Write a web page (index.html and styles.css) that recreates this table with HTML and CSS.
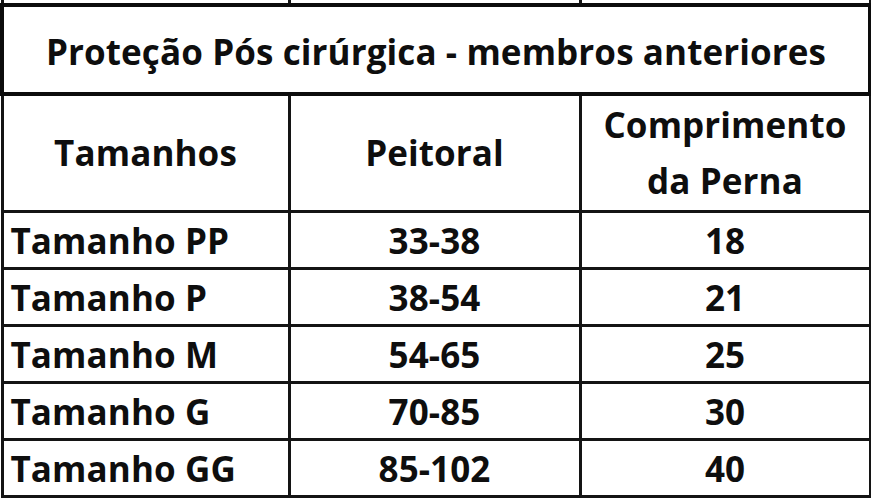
FILE: index.html
```html
<!DOCTYPE html>
<html lang="pt">
<head>
<meta charset="utf-8">
<link rel="stylesheet" href="styles.css">
</head>
<body>
<table class="sizes">
  <colgroup>
    <col class="c1"><col class="c2"><col class="c3">
  </colgroup>
  <tr class="stub"><td></td><td></td><td></td></tr>
  <tr class="title"><td colspan="3">Proteção Pós cirúrgica - membros anteriores</td></tr>
  <tr class="head">
    <td>Tamanhos</td>
    <td>Peitoral</td>
    <td>Comprimento<br>da Perna</td>
  </tr>
  <tr class="row"><td class="name">Tamanho PP</td><td>33-38</td><td>18</td></tr>
  <tr class="row"><td class="name">Tamanho P</td><td>38-54</td><td>21</td></tr>
  <tr class="row"><td class="name">Tamanho M</td><td>54-65</td><td>25</td></tr>
  <tr class="row"><td class="name">Tamanho G</td><td>70-85</td><td>30</td></tr>
  <tr class="row"><td class="name">Tamanho GG</td><td>85-102</td><td>40</td></tr>
</table>
</body>
</html>
```

FILE: styles.css
```css
html, body {
  margin: 0;
  padding: 0;
  background: #fff;
}
body {
  font-family: "Open Sans", "Noto Sans", sans-serif;
  font-weight: 700;
  color: #0e0e0e;
  width: 871px;
  height: 500px;
  overflow: hidden;
}
.sizes {
  table-layout: fixed;
  border-collapse: collapse;
  width: 868px;
}
.c1 { width: 287px; }
.c2 { width: 291px; }
.c3 { width: 290px; }
.sizes td {
  border: 3px solid #141414;
  padding: 0;
  text-align: center;
  vertical-align: middle;
  font-size: 35px;
  letter-spacing: 0.1px;
  line-height: 1;
}
.stub td {
  height: 3px;
  border-top: none;
  border-bottom: 4px solid #0c0c0c;
}
.title td {
  height: 82px;
  padding-top: 3px;
  border-bottom: 4px solid #0c0c0c;
  border-left: 4px solid #0c0c0c;
  border-right: 4px solid #0c0c0c;
}
.head td {
  height: 114px;
  line-height: 56px;
}
.row td {
  height: 54px;
}
.sizes td.name {
  text-align: left;
  padding-left: 7px;
}
```
